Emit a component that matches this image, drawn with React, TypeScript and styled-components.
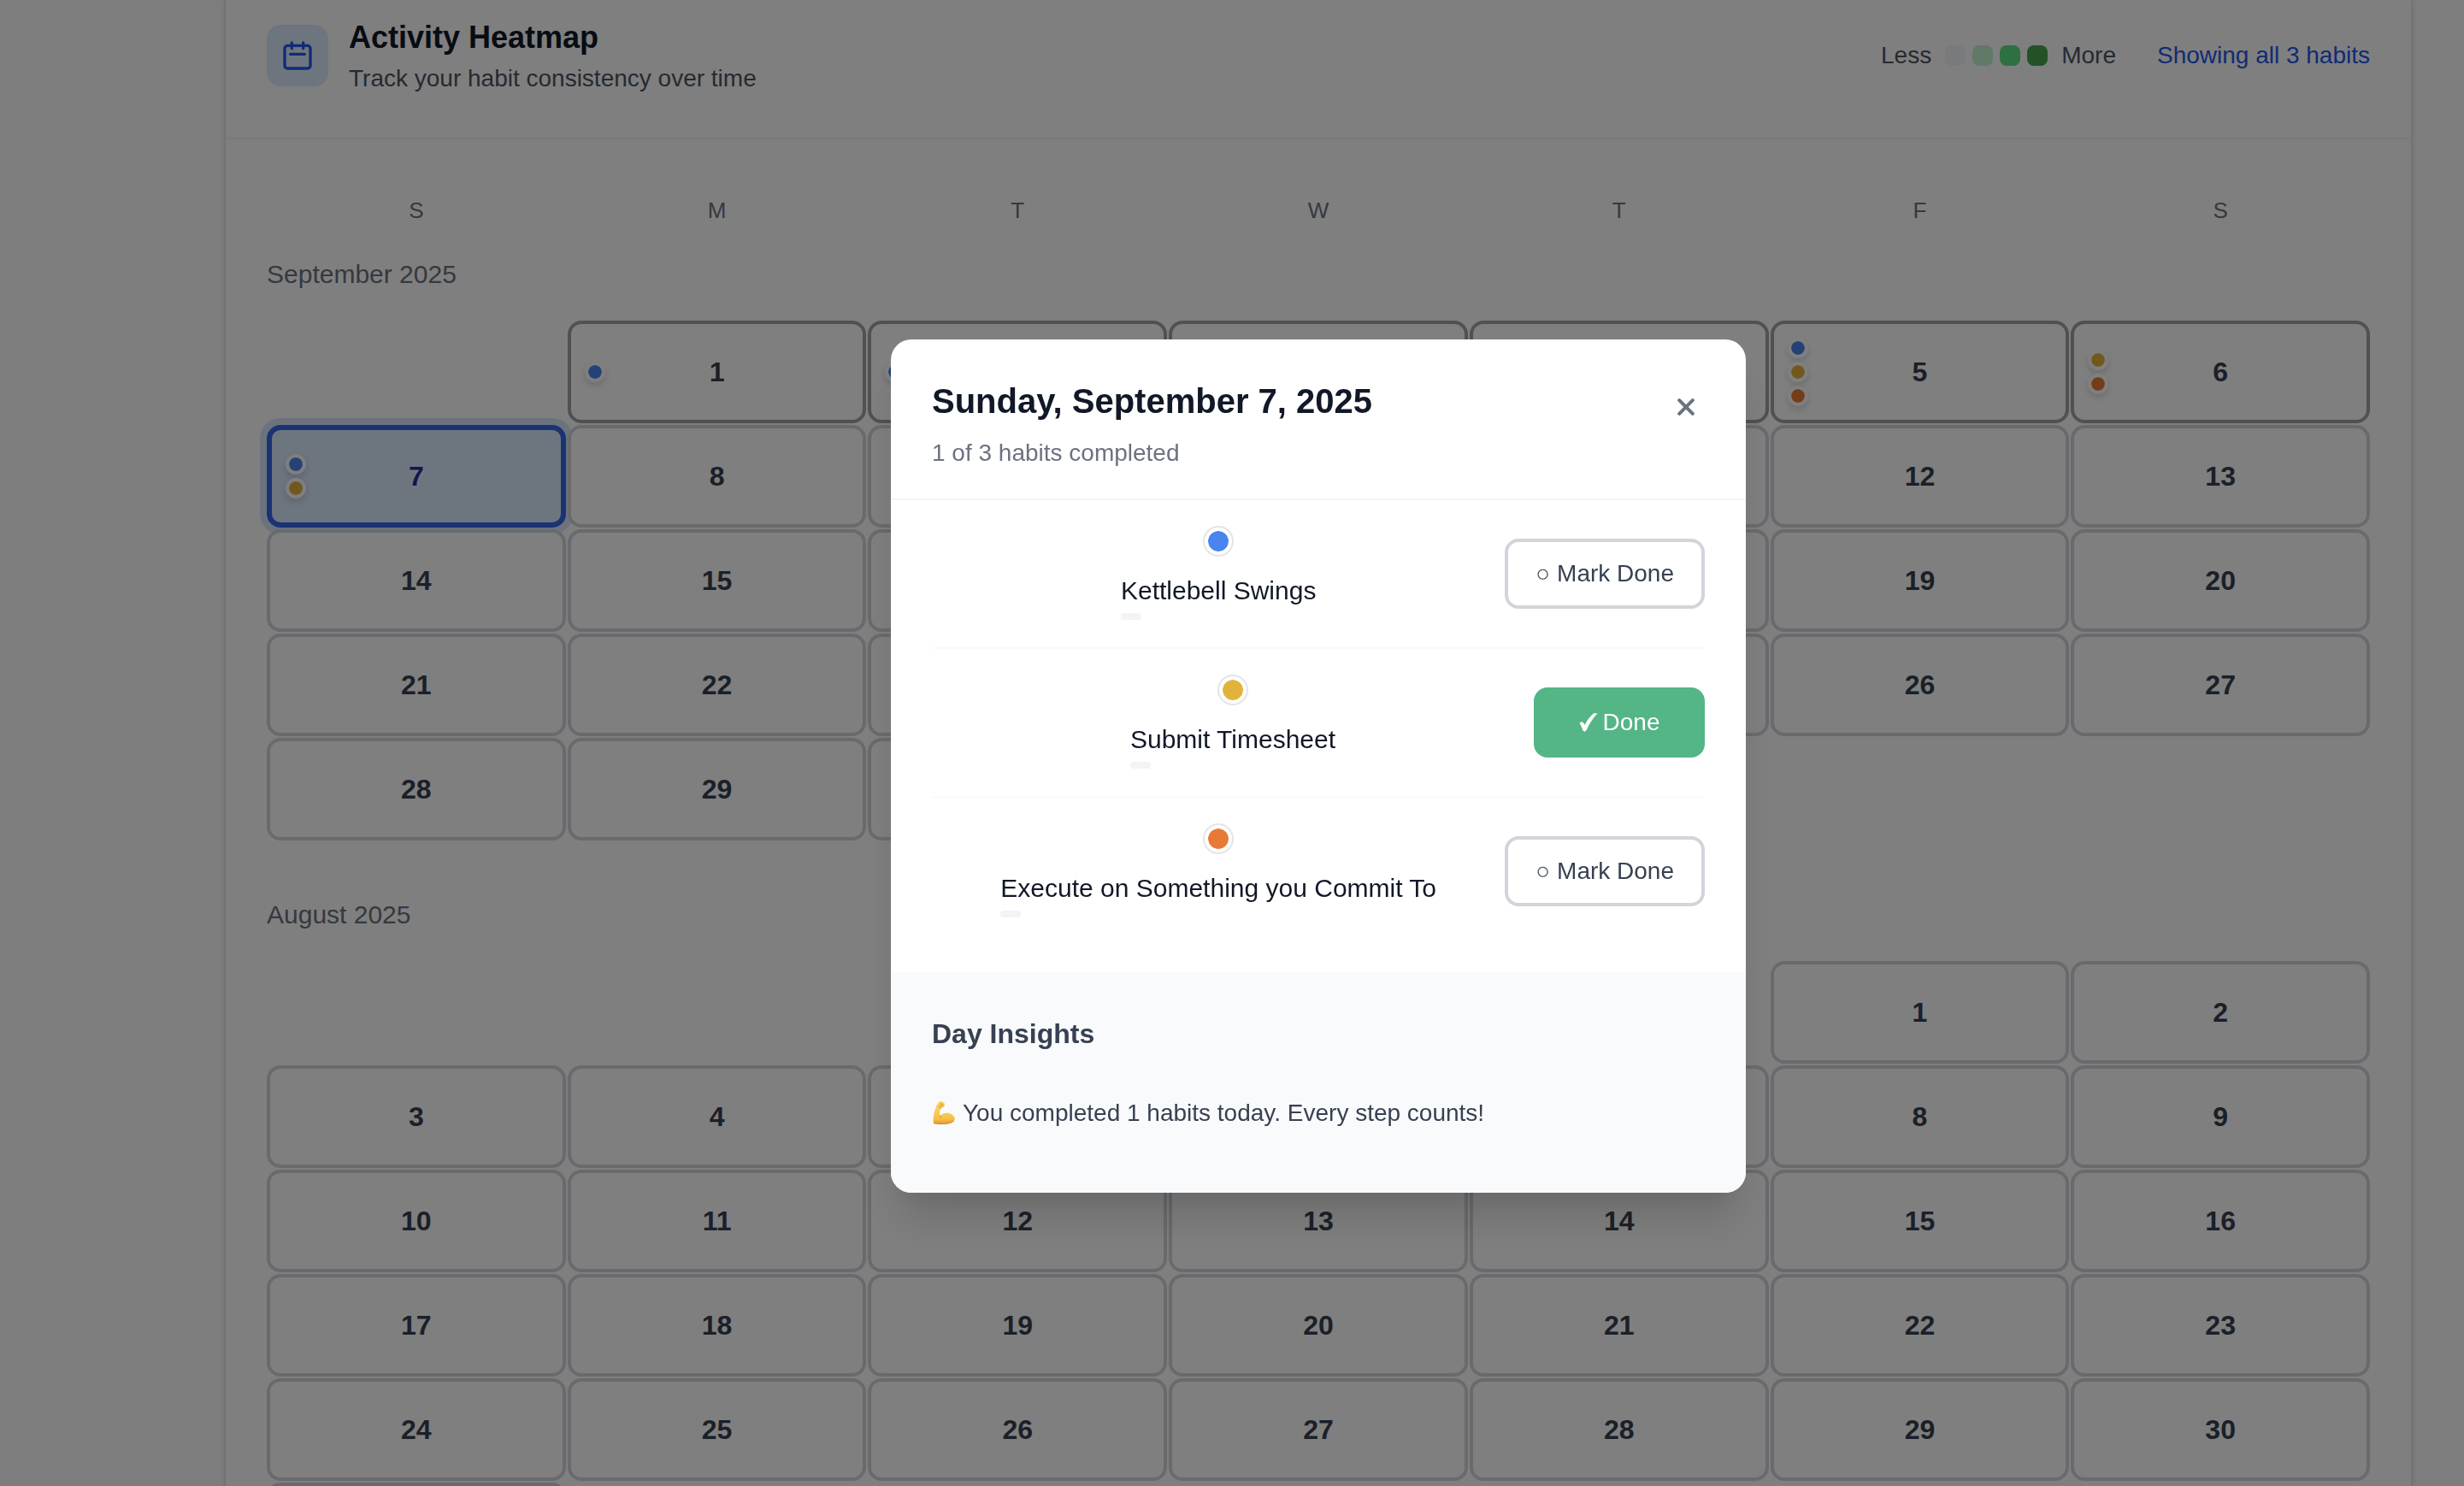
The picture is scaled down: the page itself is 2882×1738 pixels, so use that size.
import React from 'react';
import styled, { createGlobalStyle, css } from 'styled-components';

const GlobalStyle = createGlobalStyle`
  *, *::before, *::after { box-sizing: border-box; }
  html, body { margin: 0; padding: 0; background: #fafbfb; }
  body, button {
    font-family: 'Liberation Sans', Arial, Helvetica, sans-serif;
    line-height: 1.5;
  }
  h2, h3, p { margin: 0; }
  button { cursor: pointer; }
`;

const Page = styled.div`
  height: 100vh;
  overflow: hidden;
  padding: 0 60px 0 262px;
  color: #111827;
`;

const Card = styled.main`
  background: #ffffff;
  border: 2px solid #e5e7eb;
  border-width: 0 2px;
  box-shadow: 0 2px 6px rgba(0, 0, 0, 0.1);
  max-width: 2560px;
  margin: 0 auto;
`;

const CardHeader = styled.header`
  display: flex;
  align-items: center;
  justify-content: space-between;
  padding: 17px 48px 48px;
  border-bottom: 2px solid #f3f4f6;
`;

const Heading = styled.div`
  display: flex;
  align-items: center;
  gap: 24px;
`;

const IconTile = styled.div`
  display: flex;
  align-items: center;
  justify-content: center;
  width: 72px;
  height: 72px;
  border-radius: 16px;
  background: #dbeafe;
  color: #2556e8;
`;

const CardTitle = styled.h2`
  font-size: 36px;
  font-weight: 700;
  color: #111827;
`;

const CardSubtitle = styled.p`
  font-size: 28px;
  color: #4b5563;
`;

const HeaderTools = styled.div`
  display: flex;
  align-items: center;
  gap: 48px;
  font-size: 28px;
`;

const Legend = styled.div`
  display: flex;
  align-items: center;
  gap: 16px;
  color: #4b5563;
`;

const Swatches = styled.div`
  display: flex;
  gap: 8px;
`;

const Swatch = styled.span<{ $color: string }>`
  width: 24px;
  height: 24px;
  border-radius: 8px;
  background: ${(p) => p.$color};
`;

const FilterLink = styled.a`
  color: #2556e8;
  text-decoration: none;
`;

const CardBody = styled.div`
  padding: 48px;
`;

const Weekdays = styled.div`
  display: grid;
  grid-template-columns: repeat(7, 1fr);
  gap: 2px;
  margin-bottom: 16px;
`;

const Weekday = styled.div`
  padding: 16px 0;
  text-align: center;
  font-size: 26px;
  color: #6b7280;
`;

const Month = styled.section`
  margin-bottom: 64px;
`;

const MonthName = styled.h3`
  margin-bottom: 32px;
  font-size: 30px;
  font-weight: 400;
  color: #6b7280;
`;

const Days = styled.div`
  display: grid;
  grid-template-columns: repeat(7, 1fr);
  grid-auto-rows: 120px;
  gap: 2px;
`;

const Day = styled.button<{ $state: DayState; $column?: number }>`
  position: relative;
  display: flex;
  align-items: center;
  justify-content: center;
  padding: 0;
  background: #ffffff;
  border: 4px solid #d1d5db;
  border-radius: 16px;
  color: #374151;
  font-size: 32px;
  font-weight: 700;
  ${(p) => p.$column && css`grid-column-start: ${p.$column};`}
  ${(p) => p.$state === 'past' && css`border-color: #a3a3a3;`}
  ${(p) =>
    p.$state === 'selected' &&
    css`
      background: #dbeafe;
      border: 6px solid #3566e6;
      color: #1f309e;
      box-shadow: 0 0 0 8px rgba(59, 130, 246, 0.2);
      text-shadow: 0 2px 4px rgba(255, 255, 255, 0.8);
    `}
`;

const DotColumn = styled.span`
  position: absolute;
  left: 16px;
  top: 0;
  bottom: 0;
  display: flex;
  flex-direction: column;
  justify-content: center;
  gap: 4px;
`;

const Dot = styled.span<{ $color: string }>`
  width: 24px;
  height: 24px;
  border: 4px solid #ffffff;
  border-radius: 50%;
  background: ${(p) => p.$color};
  background-clip: padding-box;
  box-shadow: 0 4px 8px rgba(0, 0, 0, 0.15);
`;

const Overlay = styled.div`
  position: fixed;
  inset: 0;
  display: flex;
  align-items: center;
  justify-content: center;
  padding: 54px 0 0 202px;
  background: rgba(0, 0, 0, 0.5);
`;

const Dialog = styled.div`
  width: 100%;
  max-width: 1000px;
  overflow: hidden;
  border-radius: 24px;
  background: #ffffff;
  box-shadow:
    0 40px 50px -10px rgba(0, 0, 0, 0.14),
    0 20px 20px -10px rgba(0, 0, 0, 0.05);
`;

const DialogHeader = styled.header`
  display: flex;
  align-items: flex-start;
  justify-content: space-between;
  padding: 48px 48px 32px;
  border-bottom: 2px solid #f3f4f6;
`;

const DialogTitle = styled.h2`
  margin-bottom: 16px;
  font-size: 40px;
  font-weight: 700;
  line-height: 48px;
  color: #111827;
`;

const DialogSubtitle = styled.p`
  font-size: 28px;
  color: #6b7280;
`;

const CloseButton = styled.button`
  display: flex;
  align-items: center;
  justify-content: center;
  width: 44px;
  height: 62px;
  padding: 0;
  border: 0;
  background: transparent;
  color: #6b7280;
`;

const HabitList = styled.ul`
  margin: 0;
  padding: 0 48px 32px;
  list-style: none;
`;

const HabitRow = styled.li`
  display: flex;
  align-items: center;
  padding: 32px 0;
  border-bottom: 2px solid #f9fafb;

  &:last-child { border-bottom: 0; }
`;

const HabitInfo = styled.div`
  flex: 1;
  display: flex;
  flex-direction: column;
  align-items: center;
  gap: 24px;
`;

const HabitDot = styled.span<{ $color: string }>`
  width: 32px;
  height: 32px;
  border: 4px solid #ffffff;
  border-radius: 50%;
  background: ${(p) => p.$color};
  background-clip: padding-box;
  box-shadow: 0 0 0 2px #e5e5e5;
`;

const HabitName = styled.div`
  margin-bottom: 8px;
  font-size: 30px;
  line-height: 36px;
  color: #111827;
`;

const HabitTag = styled.div`
  width: 24px;
  height: 8px;
  border-radius: 4px;
  background: #f3f4f6;
`;

const ToggleButton = styled.button<{ $done: boolean }>`
  display: flex;
  align-items: center;
  justify-content: center;
  gap: 8px;
  min-width: 200px;
  padding: 16px 32px;
  border: 4px solid ${(p) => (p.$done ? '#54b586' : '#d1d5db')};
  border-radius: 16px;
  background: ${(p) => (p.$done ? '#54b586' : '#ffffff')};
  color: ${(p) => (p.$done ? '#ffffff' : '#374151')};
  font-size: 28px;
`;

const Insights = styled.section`
  padding: 48px;
  background: #f9fafc;
`;

const InsightsTitle = styled.h3`
  margin-bottom: 24px;
  font-size: 32px;
  font-weight: 700;
  color: #374151;
`;

const InsightText = styled.p`
  display: flex;
  align-items: center;
  gap: 8px;
  padding: 24px 0;
  font-size: 28px;
  color: #374151;
`;

type DayState = 'plain' | 'past' | 'selected';

const BLUE = '#4a84ef';
const YELLOW = '#e2b33c';
const ORANGE = '#e97a35';

const dotsByDay: Record<number, string[]> = {
  1: [BLUE],
  2: [BLUE],
  5: [BLUE, YELLOW, ORANGE],
  6: [YELLOW, ORANGE],
  7: [BLUE, YELLOW],
};

const habits = [
  { name: 'Kettlebell Swings', color: BLUE, done: false },
  { name: 'Submit Timesheet', color: YELLOW, done: true },
  { name: 'Execute on Something you Commit To', color: ORANGE, done: false },
];

const months = [
  { name: 'September 2025', days: 30, firstColumn: 2, current: true },
  { name: 'August 2025', days: 31, firstColumn: 6, current: false },
];

const legendColors = ['#f3f4f6', '#c3f3cf', '#5fe082', '#44a54c'];

function dayState(day: number, current: boolean): DayState {
  if (!current || day > 7) return 'plain';
  return day === 7 ? 'selected' : 'past';
}

const CalendarIcon = () => (
  <svg width="40" height="40" viewBox="0 0 24 24" fill="none" stroke="currentColor" strokeWidth="2" strokeLinecap="round" strokeLinejoin="round" aria-hidden="true">
    <path d="M8 7V3m8 4V3m-9 8h10M5 21h14a2 2 0 002-2V7a2 2 0 00-2-2H5a2 2 0 00-2 2v12a2 2 0 002 2z" />
  </svg>
);

const CloseIcon = () => (
  <svg width="20" height="20" viewBox="0 0 20 20" stroke="currentColor" strokeWidth="4" strokeLinecap="round" aria-hidden="true">
    <path d="M2.2 2.2l15.6 15.6M17.8 2.2L2.2 17.8" />
  </svg>
);

const CheckIcon = () => (
  <svg width="20" height="22" viewBox="0 0 20 22" fill="currentColor" stroke="currentColor" strokeWidth="1" strokeLinejoin="round" overflow="visible" aria-hidden="true">
    <path d="M1 11.8C1.8 10.6 3.4 10.2 4.4 11.2C5.4 12.2 6 13.6 6.6 14.8C9.4 9 13.4 3.4 17.2 0.8H20.6C15.4 6.2 11.2 13 8 20.2C7.2 21.4 5.6 21.6 5 20.4C3.8 17.6 2.8 14.2 1 11.8Z" />
  </svg>
);

const MuscleIcon = () => (
  <svg width="28" height="28" viewBox="0 0 28 28" aria-hidden="true">
    <defs>
      <linearGradient id="skin" x1="0" y1="0" x2="0" y2="1">
        <stop offset="0" stopColor="#fcd667" />
        <stop offset="0.75" stopColor="#f7c248" />
        <stop offset="1" stopColor="#e39a34" />
      </linearGradient>
    </defs>
    <path fill="url(#skin)" d="M7.4 1.4C8.6 0 12 0 13.4 0.8C15 1.8 15.4 4.4 14.4 6.2C13.4 7.6 11.8 8 10.4 8C9.2 10.8 8.8 13.8 9.4 17.2C11.4 14.8 14.8 13.4 18.4 13.8C23.6 14.4 26.8 17.6 26.8 20.6C26.8 24 22.6 26 17 26.6C11.4 27 5.6 26.6 2 25.8C1.2 21.6 1.8 15 4 9C5 6.2 5.8 3.4 7.4 1.4Z" />
    <path fill="none" stroke="#c98a2b" strokeWidth="1" strokeLinecap="round" d="M10.4 8C9.2 7.6 8.6 6.8 8.4 5.8M9.4 17.2C9.4 18.2 9.8 19.2 10.4 19.8M9.8 3.2C11 2.6 12.4 3 13 4.2M10.2 5.4L12.4 5" />
    <path fill="none" stroke="#d18a2c" strokeWidth="1" strokeLinecap="round" d="M2.2 25.6C7 26.6 12.6 26.8 17 26.2C20.6 25.8 23.6 24.8 25.2 23.4" />
  </svg>
);

export default function App() {
  return (
    <>
      <GlobalStyle />
      <Page>
        <Card>
          <CardHeader>
            <Heading>
              <IconTile><CalendarIcon /></IconTile>
              <div>
                <CardTitle>Activity Heatmap</CardTitle>
                <CardSubtitle>Track your habit consistency over time</CardSubtitle>
              </div>
            </Heading>
            <HeaderTools>
              <Legend>
                <span>Less</span>
                <Swatches>
                  {legendColors.map((color) => <Swatch key={color} $color={color} />)}
                </Swatches>
                <span>More</span>
              </Legend>
              <FilterLink href="#habits">Showing all 3 habits</FilterLink>
            </HeaderTools>
          </CardHeader>
          <CardBody>
            <Weekdays>
              {['S', 'M', 'T', 'W', 'T', 'F', 'S'].map((label, i) => (
                <Weekday key={i}>{label}</Weekday>
              ))}
            </Weekdays>
            {months.map((month) => (
              <Month key={month.name}>
                <MonthName>{month.name}</MonthName>
                <Days>
                  {Array.from({ length: month.days }, (_, i) => i + 1).map((day) => {
                    const dots = month.current ? dotsByDay[day] : undefined;
                    return (
                      <Day
                        key={day}
                        type="button"
                        $state={dayState(day, month.current)}
                        $column={day === 1 ? month.firstColumn : undefined}
                      >
                        {dots && (
                          <DotColumn>
                            {dots.map((color) => <Dot key={color} $color={color} />)}
                          </DotColumn>
                        )}
                        {day}
                      </Day>
                    );
                  })}
                </Days>
              </Month>
            ))}
          </CardBody>
        </Card>
      </Page>
      <Overlay>
        <Dialog role="dialog" aria-modal="true" aria-labelledby="day-title">
          <DialogHeader>
            <div>
              <DialogTitle id="day-title">Sunday, September 7, 2025</DialogTitle>
              <DialogSubtitle>1 of 3 habits completed</DialogSubtitle>
            </div>
            <CloseButton type="button" aria-label="Close"><CloseIcon /></CloseButton>
          </DialogHeader>
          <HabitList>
            {habits.map((habit) => (
              <HabitRow key={habit.name}>
                <HabitInfo>
                  <HabitDot $color={habit.color} />
                  <div>
                    <HabitName>{habit.name}</HabitName>
                    <HabitTag />
                  </div>
                </HabitInfo>
                <ToggleButton type="button" $done={habit.done}>
                  {habit.done ? <><CheckIcon />Done</> : '○ Mark Done'}
                </ToggleButton>
              </HabitRow>
            ))}
          </HabitList>
          <Insights>
            <InsightsTitle>Day Insights</InsightsTitle>
            <InsightText>
              <MuscleIcon />
              You completed 1 habits today. Every step counts!
            </InsightText>
          </Insights>
        </Dialog>
      </Overlay>
    </>
  );
}
